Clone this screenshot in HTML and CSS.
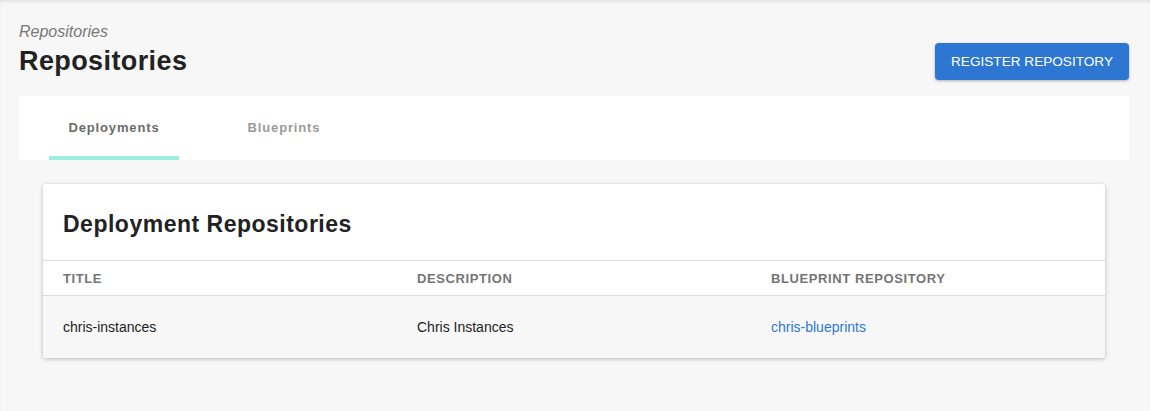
FILE: index.html
```html
<!DOCTYPE html>
<html>
<head>
<meta charset="utf-8">
<link rel="stylesheet" href="styles.css">
</head>
<body>
<div class="page">
  <div class="header">
    <div class="titles">
      <div class="crumb">Repositories</div>
      <h1 class="title">Repositories</h1>
    </div>
    <button class="btn">REGISTER REPOSITORY</button>
  </div>
  <div class="tabs">
    <div class="tab active">Deployments</div>
    <div class="tab">Blueprints</div>
  </div>
  <div class="content">
    <div class="card">
      <div class="card-head">Deployment Repositories</div>
      <div class="row head-row">
        <div class="cell">TITLE</div>
        <div class="cell">DESCRIPTION</div>
        <div class="cell">BLUEPRINT REPOSITORY</div>
      </div>
      <div class="row body-row">
        <div class="cell">chris-instances</div>
        <div class="cell">Chris Instances</div>
        <div class="cell"><a class="link" href="#">chris-blueprints</a></div>
      </div>
    </div>
  </div>
</div>
</body>
</html>
```

FILE: styles.css
```css
html, body {
  margin: 0;
  padding: 0;
  background: #f7f7f7;
  font-family: "Liberation Sans", Arial, sans-serif;
}
body {
  min-height: 411px;
  box-shadow: inset 0 3px 4px -2px rgba(0, 0, 0, 0.12);
}
.page {
  padding: 22px 21px 0 19px;
}
.header {
  display: flex;
  justify-content: space-between;
  align-items: flex-end;
}
.crumb {
  font-size: 16px;
  line-height: 20px;
  font-style: italic;
  color: #777;
}
.title {
  margin: 0;
  font-size: 27px;
  line-height: 38px;
  font-weight: bold;
  letter-spacing: 0.4px;
  color: #222;
}
.btn {
  width: 194px;
  height: 37px;
  border: 0;
  border-radius: 4px;
  background: #2d77d3;
  color: #fff;
  font-family: "Liberation Sans", Arial, sans-serif;
  font-size: 13.6px;
  padding: 0;
  box-shadow: 0 1px 3px rgba(0, 0, 0, 0.3);
}
.tabs {
  margin-top: 16px;
  height: 64px;
  background: #fff;
  display: flex;
  gap: 40px;
  padding-left: 30px;
}
.tab {
  width: 130px;
  box-sizing: border-box;
  display: flex;
  align-items: center;
  justify-content: center;
  font-size: 13px;
  font-weight: bold;
  letter-spacing: 0.85px;
  color: #9a9a9a;
  border-bottom: 4px solid transparent;
  padding-top: 2px;
}
.tab.active {
  color: #6b6b6b;
  border-bottom-color: #9deee0;
}
.content {
  padding: 24px 24px;
}
.card {
  background: #fff;
  border-radius: 3px;
  box-shadow: 0 1px 4px rgba(0, 0, 0, 0.25);
  overflow: hidden;
}
.card-head {
  height: 77px;
  box-sizing: border-box;
  padding: 4px 20px 0;
  display: flex;
  align-items: center;
  font-size: 23px;
  letter-spacing: 0.5px;
  font-weight: bold;
  color: #222;
  border-bottom: 1px solid #dcdcdc;
}
.row {
  display: grid;
  grid-template-columns: 1fr 1fr 1fr;
}
.cell {
  padding: 0 20px;
  display: flex;
  align-items: center;
}
.head-row {
  height: 35px;
  box-sizing: border-box;
  border-bottom: 1px solid #dcdcdc;
  font-size: 13px;
  font-weight: bold;
  color: #757575;
  letter-spacing: 0.6px;
}
.body-row {
  height: 62px;
  background: #f7f7f7;
  font-size: 14px;
  color: #222;
}
.link {
  color: #2d77d3;
  text-decoration: none;
}
```
